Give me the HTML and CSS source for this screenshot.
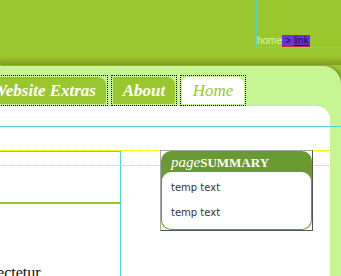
FILE: index.html
```html
<!DOCTYPE html>
<html lang="en">
<head>
  <meta charset="UTF-8">
  <title>Home</title>
  <link rel="stylesheet" href="styles.css">
</head>
<body>
  <div id="header">
    <div class="crumbs">
      <span class="crumb-home">home</span><a class="crumb-link" href="#">&gt; <u>link</u></a>
    </div>
  </div>

  <div id="panel">
    <!-- Tabs -->
    <ul class="tabs">
      <li class="tab tab-wide"><a href="#">Website Extras</a></li>
      <li class="tab"><a href="#">About</a></li>
      <li class="tab current"><a href="#">Home</a></li>
    </ul>

    <div id="content">
      <div class="guide"></div>
      <div class="columns">
        <div class="main">
          <div class="main-rule"></div>
          <p class="main-text">Lorem ipsum dolor sit amet, consectetur</p>
        </div>
        <div class="summary">
          <div class="summary-inner">
            <h3><em>page</em>SUMMARY</h3>
            <ul>
              <li>temp text</li>
              <li>temp text</li>
            </ul>
          </div>
        </div>
      </div>
    </div>
  </div>
</body>
</html>
```

FILE: styles.css
```css
body {
  margin: 0;
  padding: 0;
  background-color: #9bc72e;
  overflow: hidden;
  height: 276px;
  font-family: "Liberation Serif", serif;
}

#header {
  height: 65px;
  border-bottom: 1px solid #4fd6d6;
  display: flex;
  justify-content: flex-end;
  align-items: flex-start;
  background: linear-gradient(to bottom, #9bc72e 0, #9bc72e 56px, #7f9f22 65px);
}

.crumbs {
  width: 84px;
  height: 47px;
  border-left: 1px solid #4fd6d6;
  border-bottom: 1px solid #4fd6d6;
  display: flex;
  align-items: flex-end;
  font-family: "Liberation Sans", sans-serif;
  font-size: 10px;
  line-height: 11px;
}

.crumb-home {
  color: #d7f5a8;
  padding-bottom: 1px;
}

.crumb-link {
  background-color: #6a35dd;
  color: #1c0a5c;
  text-decoration: none;
  padding: 0 1px 0 3px;
  border-bottom: 1px solid #c4302a;
}

.crumb-link u {
  color: #1c0a5c;
}

#panel {
  background-color: #c8f594;
  border-top-right-radius: 18px;
  box-shadow: 2px 0 3px #6f8f1c;
  height: 210px;
}

/* Tabs */
.tabs {
  list-style: none;
  margin: 0 0 0 -24px;
  padding: 9px 0 0;
  display: flex;
  gap: 3px;
}

.tab {
  border: 1px dotted #000;
  padding: 1px;
  height: 27px;
}

.tab a {
  display: block;
  height: 27px;
  width: 62px;
  line-height: 28px;
  text-align: center;
  background-color: #9bc72e;
  border-radius: 0 8px 3px 0;
  color: #fff;
  font-weight: bold;
  font-style: italic;
  font-size: 17px;
  text-decoration: none;
}

.tab-wide a {
  width: 128px;
  text-align: right;
  box-sizing: border-box;
  padding-right: 10px;
}

.tab.current a {
  background-color: #fff;
  color: #9bc72e;
  font-weight: normal;
  border-radius: 6px 8px 0 0;
}

#content {
  background-color: #fff;
  margin-right: 11px;
  border-top-right-radius: 14px;
  padding-top: 20px;
  height: 150px;
}

.guide {
  border-top: 1px solid #4fd6d6;
  margin-right: -11px;
  height: 23px;
}

/* dotted guide lines */
.columns {
  display: flex;
  position: relative;
  padding-top: 1px;
  align-items: flex-start;
  background: repeating-linear-gradient(to right, #f2ee00 0, #f2ee00 1px, transparent 1px, transparent 2px) no-repeat;
  background-size: 100% 1px;
}

.columns::before {
  content: '';
  position: absolute;
  top: 15px;
  left: 0;
  right: 0;
  height: 1px;
  background: repeating-linear-gradient(to right, #f2ee00 0, #f2ee00 1px, transparent 1px, transparent 2px);
}

.main {
  width: 122px;
  height: 130px;
  margin-left: -1px;
  border: 1px solid #4fd6d6;
  border-bottom: none;
  padding-top: 50px;
  box-sizing: border-box;
}

.main-rule {
  border-top: 2px solid #9bc72e;
}

.main-text {
  margin: 60px 0 0 -218px;
  white-space: nowrap;
  font-size: 16px;
  color: #111;
}

.summary {
  position: relative;
  margin-left: 39px;
  margin-top: -1px;
  width: 151px;
  border: 1px solid;
  border-color: #a8a8a8 #555 #555 #a8a8a8;
  background-color: #fff;
}

.summary-inner {
  background-color: #6a9a32;
  border-radius: 10px;
  padding: 0 1px 1px;
}

.summary h3 {
  margin: 0;
  height: 21px;
  line-height: 22px;
  padding-left: 9px;
  color: #fff;
  font-size: 13px;
  font-weight: bold;
}

.summary h3 em {
  font-size: 15px;
  font-weight: normal;
}

.summary ul {
  list-style: none;
  margin: 0;
  padding: 3px 0 4px 9px;
  background-color: #fff;
  border-radius: 9px;
  font-family: "DejaVu Sans", sans-serif;
  font-size: 10px;
  color: #333;
}

.summary li {
  line-height: 25px;
}
```
